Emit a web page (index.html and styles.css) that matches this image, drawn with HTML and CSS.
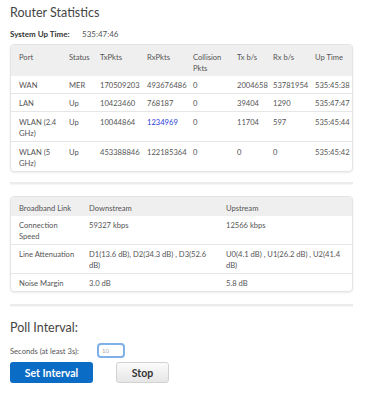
FILE: index.html
```
<!DOCTYPE html>
<html lang="en">
<head>
  <meta charset="UTF-8">
  <meta name="viewport" content="width=device-width, initial-scale=1.0">
  <title>Router Statistics</title>
  <link rel="stylesheet" href="styles.css">
</head>
<body>
  <div class="page">
    <h1 class="title">Router Statistics</h1>
    <div class="uptime"><span class="uptime-label">System Up Time:</span><span class="uptime-value">535:47:46</span></div>

    <div class="card">
      <table class="stats">
        <colgroup>
          <col style="width:58px"><col style="width:31px"><col style="width:47px"><col style="width:46px">
          <col style="width:44px"><col style="width:36px"><col style="width:42px"><col style="width:39px">
        </colgroup>
        <tr class="head">
          <th>Port</th><th>Status</th><th>TxPkts</th><th>RxPkts</th><th>Collision Pkts</th><th>Tx b/s</th><th>Rx b/s</th><th>Up Time</th>
        </tr>
        <tr>
          <td>WAN</td><td>MER</td><td>170509203</td><td>493676486</td><td>0</td><td>2004658</td><td>53781954</td><td>535:45:38</td>
        </tr>
        <tr>
          <td>LAN</td><td>Up</td><td>10423460</td><td>768187</td><td>0</td><td>39404</td><td>1290</td><td>535:47:47</td>
        </tr>
        <tr class="tall">
          <td>WLAN (2.4 GHz)</td><td>Up</td><td>10044864</td><td class="link">1234969</td><td>0</td><td>11704</td><td>597</td><td>535:45:44</td>
        </tr>
        <tr class="tall">
          <td>WLAN (5 GHz)</td><td>Up</td><td>453388846</td><td>122185364</td><td>0</td><td>0</td><td>0</td><td>535:45:42</td>
        </tr>
      </table>
    </div>

    <div class="rule"></div>

    <div class="card">
      <table class="stats link-table">
        <colgroup>
          <col style="width:78px"><col style="width:137px"><col style="width:128px">
        </colgroup>
        <tr class="head">
          <th>Broadband Link</th><th>Downstream</th><th>Upstream</th>
        </tr>
        <tr>
          <td>Connection Speed</td><td>59327 kbps</td><td>12566 kbps</td>
        </tr>
        <tr>
          <td>Line Attenuation</td><td>D1(13.6 dB), D2(34.3 dB) , D3(52.6 dB)</td><td>U0(4.1 dB) , U1(26.2 dB) , U2(41.4 dB)</td>
        </tr>
        <tr>
          <td>Noise Margin</td><td>3.0 dB</td><td>5.8 dB</td>
        </tr>
      </table>
    </div>

    <div class="rule rule-low"></div>

    <h2 class="poll-title">Poll Interval:</h2>
    <div class="poll-row">
      <label for="interval">Seconds (at least 3s):</label>
      <input id="interval" class="poll-input" type="text" value="10">
    </div>
    <div class="actions">
      <button class="btn-primary">Set Interval</button>
      <button class="btn-plain">Stop</button>
    </div>
  </div>
</body>
</html>
```

FILE: styles.css
```
body {
  margin: 0;
  font-family: Lato, "Open Sans", sans-serif;
  color: #555;
  background-color: #fff;
}
.page {
  padding: 5px 23px 0 10px;
}
.title {
  margin: 0;
  font-size: 12.5px;
  line-height: 15px;
  font-weight: normal;
  color: #444;
}
.uptime {
  margin-top: 9px;
  font-size: 8px;
  line-height: 10px;
}
.uptime-label {
  font-weight: bold;
  color: #333;
  display: inline-block;
  width: 72px;
}
.card {
  margin-top: 5px;
  border: 1px solid #e4e4e4;
  border-radius: 4px;
  box-shadow: 0 1px 2px rgba(0,0,0,0.08);
  overflow: hidden;
}
.stats {
  width: 100%;
  border-collapse: collapse;
  table-layout: fixed;
  font-size: 7.6px;
  line-height: 11px;
}
.stats th {
  text-align: left;
  font-weight: normal;
  vertical-align: top;
  background-color: #efefef;
  padding: 7px 2px 2px 0;
}
.stats td {
  vertical-align: top;
  padding: 4px 2px 2px 0;
  border-top: 1px solid #e6e6e6;
}
.stats .tall td {
  padding: 5px 2px 2px 0;
}
.stats th:first-child,
.stats td:first-child {
  padding-left: 8px;
}
.stats tr:nth-child(2) td {
  border-top: none;
}
.link {
  color: #2b3bd6;
}
.link-table th {
  padding: 6px 8px 2px 0;
}
.link-table td {
  padding: 4px 8px 2px 0;
}
.link-table td:first-child {
  padding-left: 8px;
  padding-right: 12px;
}
.rule {
  height: 2px;
  margin-top: 10px;
  margin-bottom: 12px;
  background-color: #ececec;
  box-shadow: 0 1px 1px rgba(0,0,0,0.04);
}
.rule-low {
  margin-top: 12px;
}
.rule + .card {
  margin-top: 0;
}
.poll-title {
  margin: 14px 0 0 0;
  font-size: 12.5px;
  line-height: 16px;
  font-weight: normal;
  color: #444;
}
.poll-row {
  margin-top: 7px;
  display: flex;
  align-items: center;
  font-size: 7.6px;
}
.poll-row label {
  width: 87px;
}
.poll-input {
  width: 18px;
  height: 9px;
  padding: 1px 3px;
  font-family: inherit;
  font-size: 6px;
  color: #aaa;
  border: 2px solid #7fb0e8;
  border-radius: 4px;
  outline: none;
}
.actions {
  margin-top: 4px;
  display: flex;
  gap: 23px;
}
button {
  font-family: inherit;
  font-size: 10.5px;
  height: 21px;
  border-radius: 3px;
  cursor: pointer;
}
.btn-primary {
  width: 83px;
  border: none;
  background-color: #0b6cc6;
  color: #fff;
  font-weight: bold;
}
.btn-plain {
  width: 53px;
  border: 1px solid #d2d2d2;
  background: linear-gradient(#fbfbfb, #e6e6e6);
  color: #333;
  font-weight: bold;
}
```
